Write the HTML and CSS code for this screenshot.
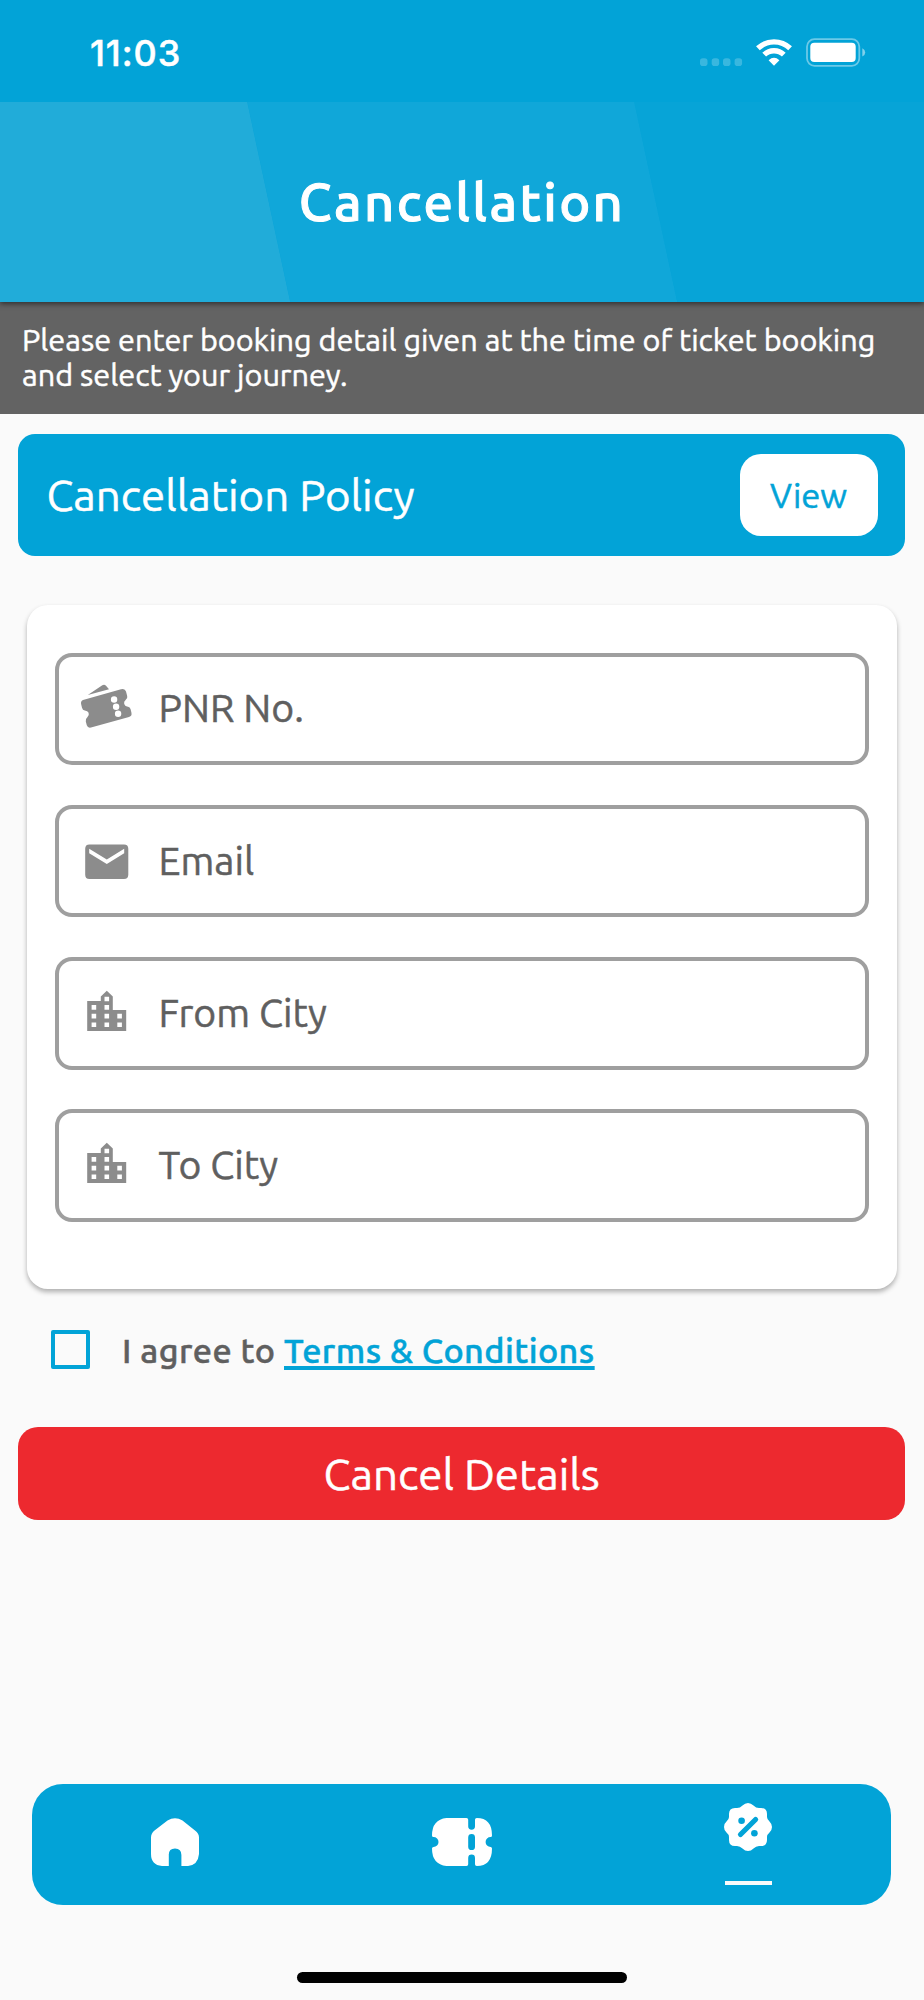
FILE: index.html
```html
<!DOCTYPE html>
<html lang="en">
<head>
<meta charset="utf-8">
<title>Cancellation</title>
<link rel="stylesheet" href="styles.css">
</head>
<body>
<div class="status">
  <span class="time">11:03</span>
  <svg class="status-icons" width="168" height="30" viewBox="0 0 168 30">
    <g fill="#fff" fill-opacity=".22">
      <rect x="0" y="20.300" width="7.500" height="7.700" rx="2.800"/><rect x="11.700" y="20.300" width="7.500" height="7.700" rx="2.800"/><rect x="23" y="20.300" width="7.500" height="7.700" rx="2.800"/><rect x="34.600" y="20.300" width="7.500" height="7.700" rx="2.800"/>
    </g>
    <g fill="none" stroke="#fff" stroke-width="5.400">
      <path d="M57.900 10.300A23.500 23.500 0 0 1 90.100 10.300"/>
      <path d="M64.200 16.600A14.200 14.200 0 0 1 83.800 16.600"/>
    </g>
    <path d="M74 27.800L68.600 22.200Q74 17.300 79.400 22.200Z" fill="#fff"/>
    <rect x="107" y="1.200" width="52.300" height="26.600" rx="7.500" fill="none" stroke="#fff" stroke-opacity=".42" stroke-width="1.800"/>
    <rect x="110.300" y="4.800" width="45.400" height="19.200" rx="4" fill="#fff"/>
    <path d="M162.300 10.200Q165.200 11.500 165.200 14.400T162.300 18.600Z" fill="#fff" fill-opacity=".5"/>
  </svg>
</div>
<header class="header">
  <svg class="header-art" width="924" height="200" viewBox="0 0 924 200">
    <path d="M0 0H247.300L290.300 200H0Z" fill="#21acd9"/>
    <path d="M247.300 0H634.300L677.300 200H290.300Z" fill="#10a7d9"/>
    <path d="M634.300 0H924V200H677.300Z" fill="#07a4d7"/>
  </svg>
  <h1 class="title">Cancellation</h1>
</header>
<p class="info">Please enter booking detail given at the time of ticket booking<br>and select your journey.</p>
<section class="policy">
  <span class="policy-name">Cancellation Policy</span>
  <button class="view"><span>View</span></button>
</section>
<form class="card">
  <label class="field">
    <svg width="60" height="60" viewBox="0 0 60 60" fill="#8c8c8c">
      <path d="M13.800 17L28.300 7.200Q30.500 6 32 7.800L35 11.300Z"/>
      <path fill-rule="evenodd" d="M9 22L47 11.200Q51 10 52 13.600L53.200 18Q53.800 20.300 51.800 21.800Q49.500 23.600 50.200 26Q51 28.600 54 28.700Q56 28.900 56.600 31.200L57.400 34.600Q58.300 38.200 55 39L17 49.600Q13.800 50.400 12.800 47.300L11.800 43.500Q11.200 41 13.500 39Q15.400 37 14.600 34.800Q13.700 32.600 10.800 32.400Q8.600 32.200 8 29.700L7.200 26.600Q6.300 23 9 22ZM40.100 18.300A3.200 3.200 0 1 0 40.100 24.700A3.200 3.200 0 1 0 40.100 18.300ZM42.100 25.500A3.200 3.200 0 1 0 42.100 31.900A3.200 3.200 0 1 0 42.100 25.500ZM44.100 32.600A3.200 3.200 0 1 0 44.100 39A3.200 3.200 0 1 0 44.100 32.600Z"/>
    </svg>
    <span class="label">PNR No.</span>
  </label>
  <label class="field">
    <svg width="60" height="60" viewBox="0 0 60 60" fill="#8c8c8c">
      <path fill-rule="evenodd" d="M15.400 13.500H50Q54.300 13.500 54.300 17.800V43.800Q54.300 48 50 48H15.400Q11.200 48 11.200 43.800V17.800Q11.200 13.500 15.400 13.500ZM15.200 17.800V22.200L32.800 33L50.200 22.200V17.800L32.800 28.600Z"/>
    </svg>
    <span class="label">Email</span>
  </label>
  <label class="field">
    <svg width="60" height="60" viewBox="0 0 60 60" fill="#8c8c8c">
      <path fill-rule="evenodd" d="M13.200 18H26.800V13.500L32.800 7.700L38.800 13.500V27H52.200V48.100H13.200ZM17.600 22.100v4.600h4.600v-4.600zM17.600 30.800v4.600h4.600v-4.600zM17.600 39.500v4.600h4.600v-4.600zM30.500 13.700v4.600h4.600v-4.600zM30.500 22.100v4.600h4.600v-4.600zM30.500 30.800v4.600h4.600v-4.600zM30.500 39.500v4.600h4.600v-4.600zM43.300 30.800v4.600h4.600v-4.600zM43.300 39.500v4.600h4.600v-4.600z"/>
    </svg>
    <span class="label">From City</span>
  </label>
  <label class="field">
    <svg width="60" height="60" viewBox="0 0 60 60" fill="#8c8c8c">
      <path fill-rule="evenodd" d="M13.200 18H26.800V13.500L32.800 7.700L38.800 13.500V27H52.200V48.100H13.200ZM17.600 22.100v4.600h4.600v-4.600zM17.600 30.800v4.600h4.600v-4.600zM17.600 39.500v4.600h4.600v-4.600zM30.500 13.700v4.600h4.600v-4.600zM30.500 22.100v4.600h4.600v-4.600zM30.500 30.800v4.600h4.600v-4.600zM30.500 39.500v4.600h4.600v-4.600zM43.300 30.800v4.600h4.600v-4.600zM43.300 39.500v4.600h4.600v-4.600z"/>
    </svg>
    <span class="label">To City</span>
  </label>
</form>
<div class="agree">
  <span class="box"></span>
  <span class="agree-text">I agree to</span>
  <a class="terms">Terms &amp; Conditions</a>
</div>
<button class="cancel"><span>Cancel Details</span></button>
<nav class="nav">
  <a class="tab">
    <svg width="48" height="48" viewBox="0 0 48 48" fill="#fff">
      <path d="M17.800 48H11Q0 47 0 36V19.500Q0 15.500 3.500 12.500L16.500 2.500Q24 -2 31.500 2.500L44 12.500Q48 15.500 48 19.500V36Q47 47 37 48H30.400V37Q30.400 30.500 24 30.500T17.800 37Z"/>
    </svg>
  </a>
  <a class="tab">
    <svg width="60" height="48" viewBox="0 0 60 48" fill="#fff">
      <path d="M14.500 0H34.500Q36.200 0 36.200 1.800V8.300A3.400 3.400 0 0 0 43 8.300V1.800Q43 0 44.800 0Q60 0 60 17.500Q60 19 58.600 19A5 5 0 0 0 58.600 29Q60 29 60 30.500Q60 48 44.800 48Q43 48 43 46.200V40A3.400 3.400 0 0 0 36.200 40V46.200Q36.200 48 34.500 48H14.500Q0 46.500 0 30.500Q0 29 1.500 29A5 5 0 0 0 1.500 19Q0 19 0 17.500Q0 1.500 14.500 0ZM39.600 16A3.400 3.400 0 0 0 36.200 19.400V28.700A3.400 3.400 0 0 0 43 28.700V19.400A3.400 3.400 0 0 0 39.600 16Z"/>
    </svg>
  </a>
  <a class="tab tab-active">
    <svg width="48" height="48" viewBox="0 0 48 48">
      <path fill="#fff" d="M24 0Q27 0 29.500 2.500T35 5H37Q43 5 43 11V14Q43 16.500 45.500 18.500Q48 21 48 24T45.500 29.500Q43 31.500 43 34V37Q43 43 37 43H35Q32 43 29.500 45.500T24 48T18.500 45.500T13 43H11Q5 43 5 37V34Q5 31.500 2.500 29.500T0 24T2.500 18.500Q5 16.500 5 14V11Q5 5 11 5H13Q16 5 18.500 2.500T24 0Z"/>
      <g fill="#02a3d7"><circle cx="17.600" cy="17.800" r="3.300"/><circle cx="30.400" cy="30.200" r="3.300"/></g>
      <path d="M16.500 31.500L31.600 16.500" stroke="#02a3d7" stroke-width="5.200" stroke-linecap="round"/>
    </svg>
    <span class="underline"></span>
  </a>
</nav>
<div class="home-bar"></div>
</body>
</html>
```

FILE: styles.css
```css
* { box-sizing: border-box; }
body {
  margin: 0;
  width: 924px;
  height: 2000px;
  display: flex;
  flex-direction: column;
  background: #fafafa;
  font-family: Ubuntu, "Noto Sans", sans-serif;
  font-weight: 400;
  -webkit-text-stroke: .5px currentColor;
  color: #fff;
  white-space: nowrap;
  overflow: hidden;
}
body > * { flex: none; }
.status {
  height: 102px;
  background: #02a3d7;
  display: flex;
  justify-content: space-between;
  align-items: flex-start;
  padding: 38px 56px 0 90px;
  position: relative;
  z-index: 2;
}
.time { font: 550 36px/30px Inter, sans-serif; letter-spacing: .900px; }
.header {
  height: 200px;
  display: grid;
  background: #07a4d7;
  box-shadow: 0 2px 5px rgba(0, 0, 0, .5);
  z-index: 1;
}
.header-art, .title { grid-area: 1 / 1; }
.title { margin: 0; place-self: center; font-size: 52.500px; font-weight: 500; line-height: 60px; letter-spacing: 2.300px; -webkit-text-stroke: 1px currentColor; }
.info {
  margin: 0;
  height: 112px;
  padding: 21px 22px 0;
  background: #636363;
  font-size: 30.600px;
  line-height: 34.800px;
}
.policy {
  margin: 20px 19px 0 18.400px;
  height: 122px;
  border-radius: 17px;
  background: #02a3d7;
  padding: 0 27.500px 0 28px;
  display: flex;
  align-items: center;
  justify-content: space-between;
}
.policy-name { font-size: 43.800px; line-height: 50px; }
button { border: 0; padding: 0; font-family: inherit; font-weight: inherit; -webkit-text-stroke: .5px currentColor; }
.view {
  width: 138px;
  height: 82px;
  border-radius: 21px;
  background: #fff;
  color: #02a3d7;
  font-size: 34.500px;
}
.card {
  margin: 49px 27px 0;
  height: 684px;
  padding: 47.500px 28px 0;
  display: flex;
  flex-direction: column;
  gap: 39.800px;
  border-radius: 21px;
  background: #fff;
  box-shadow: 0 3px 5px rgba(0, 0, 0, .3);
}
.field {
  height: 112.500px;
  flex: none;
  border: 4px solid #9f9f9f;
  border-radius: 17px;
  padding-left: 14.500px;
  display: flex;
  align-items: center;
  gap: 25px;
  color: #5f5f5f;
  font-size: 39.200px;
}
.field svg { margin-top: -1px; }
.label { margin-top: -3px; }
.agree {
  margin-top: 41px;
  height: 39px;
  padding-left: 51px;
  display: flex;
  align-items: center;
  font-size: 34.200px;
  font-weight: 500;
  line-height: 39px;
  letter-spacing: .450px;
  color: #5f5f5f;
}
.box { width: 39px; height: 39px; border: 4px solid #02a3d7; border-radius: 2px; }
.agree-text { margin-left: 32px; width: 162px; padding-top: 1px; }
.terms { padding-top: 1px; color: #02a3d7; text-decoration: underline; text-decoration-thickness: 4px; text-underline-offset: 3px; text-decoration-skip-ink: none; }
.cancel {
  margin: 58px 19px 0 18.400px;
  height: 93px;
  border-radius: 20px;
  background: #ed292f;
  color: #fff;
  font-size: 43.800px;
}
.nav {
  margin: 264px 32.700px 0 32.200px;
  height: 121px;
  border-radius: 31px;
  background: #02a3d7;
  display: grid;
  grid-template-columns: repeat(3, 1fr);
}
.tab { display: flex; flex-direction: column; align-items: center; padding-top: 34px; }
.tab-active { padding-top: 19px; gap: 30px; }
.underline { width: 47px; height: 4px; background: #fafafa; }
.home-bar { width: 330px; height: 11px; margin: 67px auto 0; border-radius: 6px; background: #000; }
```
